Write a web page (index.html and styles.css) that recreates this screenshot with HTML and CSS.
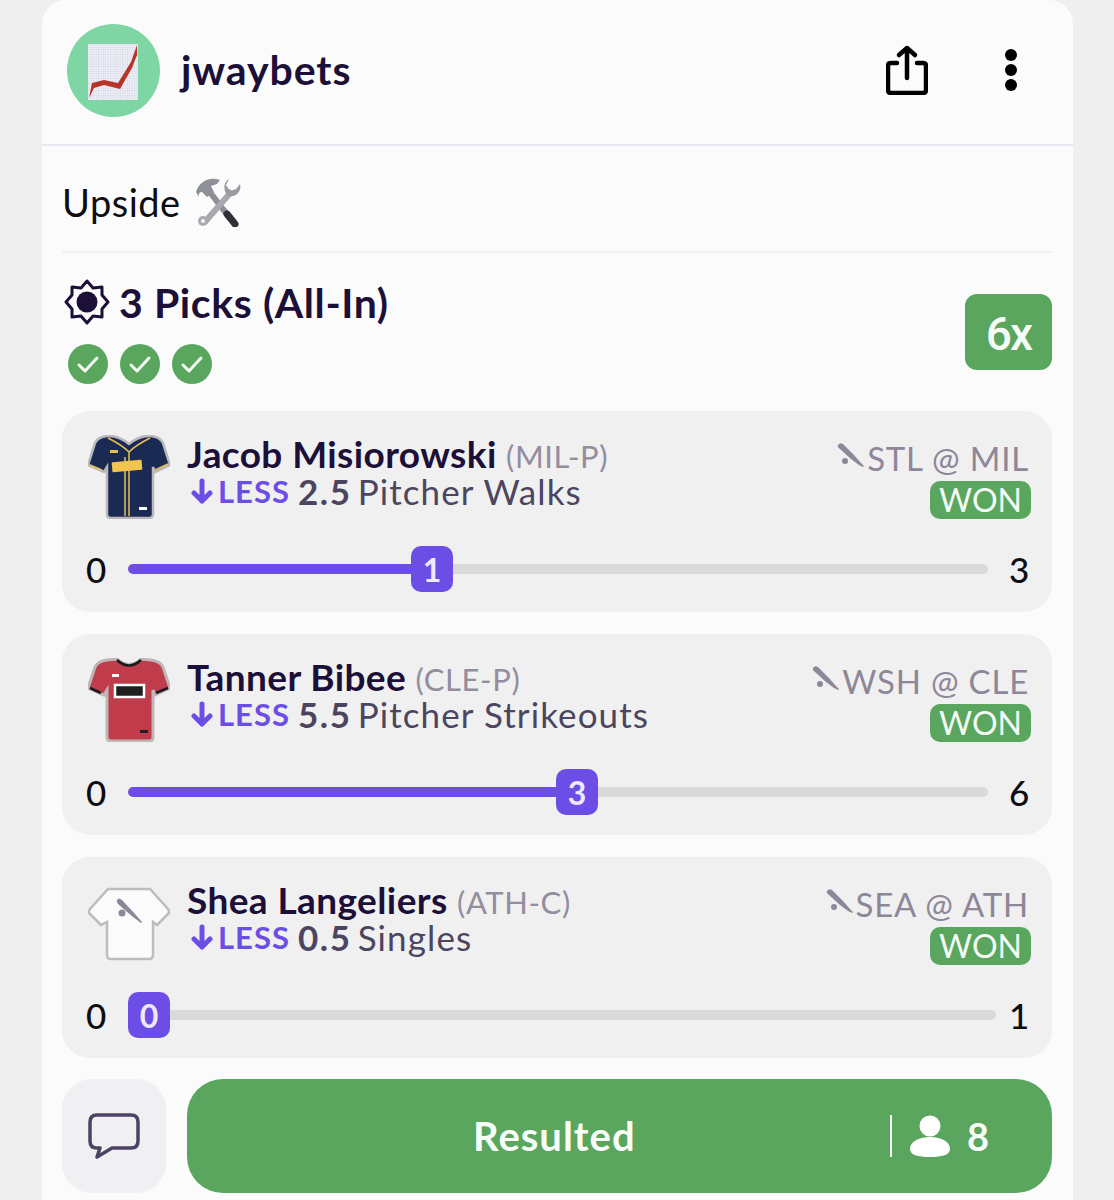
FILE: index.html
```html
<!DOCTYPE html>
<html lang="en">
<head>
<meta charset="utf-8">
<title>jwaybets</title>
<link rel="stylesheet" href="styles.css">
</head>
<body>
<main class="card">
  <header class="head">
    <div class="avatar">
      <svg class="chart" viewBox="0 0 52 58">
        <defs><pattern id="grid" width="2.4" height="2.4" patternUnits="userSpaceOnUse"><rect width="2.4" height="2.4" fill="#eeeef6"/><path d="M2.4 0V2.4H0" fill="none" stroke="#c4c6da" stroke-width=".5"/></pattern></defs>
        <rect x="1" y="1" width="50" height="56" fill="url(#grid)"/>
        <path d="M2 55 5 40 17 37 31 40 44 19 50 2V12L45 25 33 46 17 42 7 45Z" fill="#b8342b"/>
      </svg>
    </div>
    <div class="user">jwaybets</div>
    <svg class="share" viewBox="0 0 42 50" fill="none" stroke="#000" stroke-width="4.5" stroke-linecap="round" stroke-linejoin="round"><path d="M11 18H5Q2 18 2 21V45Q2 48 5 48H37Q40 48 40 45V21Q40 18 37 18H31"/><path d="M21 33V3M13 10 21 3 29 10"/></svg>
    <div class="dots"><i></i><i></i><i></i></div>
  </header>
  <section class="body">
    <div class="title">
      <span>Upside</span>
      <svg class="tools" viewBox="0 0 48 50">
        <path d="M35 40 15 14" stroke="#8c8e94" stroke-width="6"/>
        <path d="M33 37 41 47" stroke="#2f3137" stroke-width="7" stroke-linecap="round"/>
        <path d="M2 15C5 5 15-1 26 3L23 7 17 9 20 15 13 20 8 15Q4 15 5 20Z" fill="#8d9097"/>
        <path d="M10 46 38 14" stroke="#a7a9ae" stroke-width="6"/>
        <path d="M35 2 32 8 36 14 42 12 46 7C48 14 42 21 34 19 29 14 29 5 35 2Z" fill="#9a9ca2"/>
        <circle cx="9" cy="44" r="5" fill="#a7a9ae"/><circle cx="9" cy="44" r="2" fill="#f3f3f3"/>
      </svg>
    </div>
    <div class="summary">
      <div class="summary-main">
        <div class="picks">
          <svg class="seal" viewBox="0 0 46 46"><path d="M23 2 29 9 38 8 38 16 44 23 38 30 38 38 29 37 23 44 17 37 8 38 8 30 2 23 8 16 8 8 17 9Z" fill="none" stroke="#1c1038" stroke-width="3" stroke-linejoin="round"/><circle cx="23" cy="23" r="10.5" fill="#1c1038"/></svg>
          <span>3 Picks (All-In)</span>
        </div>
        <div class="checks">
          <svg class="check" viewBox="0 0 40 40"><circle cx="20" cy="20" r="20" fill="#5aa65f"/><path d="M11 21 17 27 29 14" fill="none" stroke="#f2faf2" stroke-width="3" stroke-linecap="round" stroke-linejoin="round"/></svg>
          <svg class="check" viewBox="0 0 40 40"><circle cx="20" cy="20" r="20" fill="#5aa65f"/><path d="M11 21 17 27 29 14" fill="none" stroke="#f2faf2" stroke-width="3" stroke-linecap="round" stroke-linejoin="round"/></svg>
          <svg class="check" viewBox="0 0 40 40"><circle cx="20" cy="20" r="20" fill="#5aa65f"/><path d="M11 21 17 27 29 14" fill="none" stroke="#f2faf2" stroke-width="3" stroke-linecap="round" stroke-linejoin="round"/></svg>
        </div>
      </div>
      <div class="mult">6x</div>
    </div>

    <article class="pick">
      <div class="pick-top">
        <svg class="jersey" viewBox="0 0 82 84">
          <path d="M19 1Q30 0 41 9 52 0 63 1 72 2 75 8L82 30 67 37 65 32V79Q65 83 61 83H23Q19 83 19 79V32L16 37 0 30 7 8Q10 2 19 1Z" fill="#1b2a52" stroke="#b9b9bd" stroke-width="2.5"/>
          <path d="M20 3Q34 10 41 17 48 10 62 3M41 17V81M37 22V81M2 30 14 35M67 35 80 29" fill="none" stroke="#e4c057" stroke-width="1.5"/>
          <rect x="24" y="26" width="30" height="10" rx="1" fill="#f0c44e" transform="rotate(-5 39 31)"/>
          <rect x="22" y="15" width="8" height="3" fill="#e9bf52"/>
          <rect x="51" y="72" width="8" height="3" fill="#fff"/>
        </svg>
        <div class="info">
          <div class="name">Jacob Misiorowski <span class="team">(MIL-P)</span></div>
          <div class="line">
            <svg class="arrow" viewBox="0 0 22 26" fill="none" stroke="#6c4ee6" stroke-width="5" stroke-linecap="round" stroke-linejoin="round"><path d="M11 3V23M3 15 11 23 19 15"/></svg>
            <span class="less">LESS</span> <b class="num">2.5</b> <span class="stat">Pitcher Walks</span>
          </div>
        </div>
        <div class="side">
          <div class="game">
            <svg class="bat" viewBox="0 0 28 28"><path d="M1 3Q3 0 6 2L17 13 24 21 27 24 26 25 22 23 14 17 3 7Q0 5 1 3Z" fill="#8d8798"/><circle cx="8" cy="19" r="3" fill="#8d8798"/></svg>
            <span>STL @ MIL</span>
          </div>
          <div class="won">WON</div>
        </div>
      </div>
      <div class="slider">
        <span class="end">0</span>
        <div class="track">
          <div class="fill" style="width:283px"></div>
          <div class="thumb">1</div>
          <div class="rest"></div>
        </div>
        <span class="end">3</span>
      </div>
    </article>

    <article class="pick">
      <div class="pick-top">
        <svg class="jersey" viewBox="0 0 82 84">
          <path d="M19 2 29 1Q41 12 53 1L63 2Q72 3 75 9L82 30 67 37 65 32V79Q65 83 61 83H23Q19 83 19 79V32L16 37 0 30 7 9Q10 3 19 2Z" fill="#c13c4b" stroke="#bfb6b7" stroke-width="3"/>
          <path d="M29 2Q41 13 53 2" fill="none" stroke="#1a1a1a" stroke-width="2.5"/>
          <path d="M2 30 13 35M68 35 80 30" fill="none" stroke="#1a1a1a" stroke-width="2.5"/>
          <rect x="27" y="27" width="29" height="12" fill="#1f1f1f" stroke="#fff" stroke-width="2.5"/>
          <rect x="24" y="16" width="7" height="3" fill="#fff"/>
          <rect x="52" y="72" width="8" height="3" fill="#1f1f1f"/>
        </svg>
        <div class="info">
          <div class="name">Tanner Bibee <span class="team">(CLE-P)</span></div>
          <div class="line">
            <svg class="arrow" viewBox="0 0 22 26" fill="none" stroke="#6c4ee6" stroke-width="5" stroke-linecap="round" stroke-linejoin="round"><path d="M11 3V23M3 15 11 23 19 15"/></svg>
            <span class="less">LESS</span> <b class="num">5.5</b> <span class="stat">Pitcher Strikeouts</span>
          </div>
        </div>
        <div class="side">
          <div class="game">
            <svg class="bat" viewBox="0 0 28 28"><path d="M1 3Q3 0 6 2L17 13 24 21 27 24 26 25 22 23 14 17 3 7Q0 5 1 3Z" fill="#8d8798"/><circle cx="8" cy="19" r="3" fill="#8d8798"/></svg>
            <span>WSH @ CLE</span>
          </div>
          <div class="won">WON</div>
        </div>
      </div>
      <div class="slider">
        <span class="end">0</span>
        <div class="track">
          <div class="fill" style="width:428px"></div>
          <div class="thumb">3</div>
          <div class="rest"></div>
        </div>
        <span class="end">6</span>
      </div>
    </article>

    <article class="pick">
      <div class="pick-top">
        <svg class="jersey" viewBox="0 0 82 84">
          <path d="M20 8H62L80 28Q82 31 80 33L69 44 65 41V74Q65 78 61 78H23Q19 78 19 74V41L13 44 2 33Q0 31 2 28Z" fill="#fbfbfc" stroke="#bdbdc0" stroke-width="2.5"/>
          <path d="M29 19Q31 16 34 19L47 33 54 41 53 42 45 36 31 24Q28 21 29 19Z" fill="#8d8798"/>
          <circle cx="34" cy="32" r="3.5" fill="#8d8798"/>
        </svg>
        <div class="info">
          <div class="name">Shea Langeliers <span class="team">(ATH-C)</span></div>
          <div class="line">
            <svg class="arrow" viewBox="0 0 22 26" fill="none" stroke="#6c4ee6" stroke-width="5" stroke-linecap="round" stroke-linejoin="round"><path d="M11 3V23M3 15 11 23 19 15"/></svg>
            <span class="less">LESS</span> <b class="num">0.5</b> <span class="stat">Singles</span>
          </div>
        </div>
        <div class="side">
          <div class="game">
            <svg class="bat" viewBox="0 0 28 28"><path d="M1 3Q3 0 6 2L17 13 24 21 27 24 26 25 22 23 14 17 3 7Q0 5 1 3Z" fill="#8d8798"/><circle cx="8" cy="19" r="3" fill="#8d8798"/></svg>
            <span>SEA @ ATH</span>
          </div>
          <div class="won">WON</div>
        </div>
      </div>
      <div class="slider">
        <span class="end">0</span>
        <div class="track track-wide">
          <div class="thumb">0</div>
          <div class="rest"></div>
        </div>
        <span class="end">1</span>
      </div>
    </article>

    <div class="actions">
      <div class="comment">
        <svg class="bubble" viewBox="0 0 52 46" fill="none" stroke="#4c4263" stroke-width="3.5" stroke-linejoin="round"><path d="M9 2H43Q50 2 50 9V28Q50 35 43 35H24L9 44 12 35H9Q2 35 2 28V9Q2 2 9 2Z"/></svg>
      </div>
      <div class="result">
        <span class="result-label">Resulted</span>
        <div class="entries">
          <svg class="person" viewBox="0 0 40 42" fill="#fff"><circle cx="20" cy="11" r="10.5"/><path d="M0 34C0 26 10 22 20 22S40 26 40 34C40 40 32 42 20 42S0 40 0 34Z"/></svg>
          <span>8</span>
        </div>
      </div>
    </div>
  </section>
</main>
</body>
</html>
```

FILE: styles.css
```css
* { box-sizing: border-box; }
html, body { margin: 0; height: 1200px; overflow: hidden; }
body { background: #efefef; font-family: "Lato", "Liberation Sans", sans-serif; color: #1c1038; }
.card { width: 1031px; height: 1200px; margin-left: 42px; background: #fbfbfc; border-radius: 24px 24px 0 0; }
.head { height: 146px; display: flex; align-items: center; padding: 0 57px 4px 25px; border-bottom: 2px solid #ebe6ef; }
.avatar { width: 93px; height: 93px; border-radius: 50%; background: #7ed6a5; display: flex; align-items: center; justify-content: center; flex: none; }
.chart { width: 52px; height: 58px; margin: 3px 0 0 -1px; }
.user { margin-left: 21px; margin-bottom: 2px; font-size: 41px; font-weight: 700; flex: 1; letter-spacing: .9px; }
.share { width: 42px; height: 50px; }
.dots { width: 12px; margin-left: 77px; display: flex; flex-direction: column; gap: 3px; margin-right: -1px; }
.dots i { display: block; width: 12px; height: 12px; border-radius: 50%; background: #000; }
.body { padding: 0 21px 0 20px; }
.title { height: 107px; display: flex; align-items: center; gap: 13px; font-size: 38px; letter-spacing: .5px; color: #0d0d12; border-bottom: 2px solid #f0eff1; padding-top: 6px; }
.tools { width: 48px; height: 50px; }
.summary { height: 158px; display: flex; justify-content: space-between; align-items: flex-start; }
.picks { display: flex; align-items: center; gap: 9px; margin-top: 26px; font-size: 41px; font-weight: 700; letter-spacing: .6px; height: 46px; padding-left: 2px; }
.seal { width: 46px; height: 46px; }
.checks { display: flex; gap: 12px; margin-top: 19px; padding-left: 6px; }
.check { width: 40px; height: 40px; }
.mult { width: 87px; height: 76px; margin-top: 41px; padding-top: 4px; border-radius: 12px; background: #5aa65f; color: #f4fbf4; display: flex; align-items: center; justify-content: center; font: 500 46px "Roboto", sans-serif; letter-spacing: -2px; }
.pick { height: 201px; margin-bottom: 22px; background: #f0f0f1; border-radius: 28px; padding: 24px 23px 0 26px; }
.pick-top { display: flex; height: 87px; }
.jersey { width: 82px; height: 84px; flex: none; }
.info { margin-left: 17px; flex: 1; }
.name { font-size: 37px; font-weight: 700; line-height: 36px; margin-top: 1px; letter-spacing: .4px; white-space: nowrap; }
.team { font-size: 31px; font-weight: 400; letter-spacing: .6px; color: #938d9f; }
.line { font-size: 35px; line-height: 34px; color: #4c4560; white-space: nowrap; display: flex; align-items: center; gap: 8px; letter-spacing: 1.1px; }
.arrow { width: 22px; height: 26px; margin-left: 4px; margin-right: -3px; }
.less { color: #6c4ee6; font-size: 31px; font-weight: 700; letter-spacing: 1px; }
.num { font-weight: 700; letter-spacing: 1.6px; margin-right: -2px; }
.side { display: flex; flex-direction: column; align-items: flex-end; }
.game { display: flex; align-items: center; gap: 2px; font-size: 33px; letter-spacing: .8px; color: #8d8798; height: 46px; white-space: nowrap; }
.bat { width: 28px; height: 28px; margin-bottom: 4px; }
.won { width: 101px; height: 38px; margin-right: -2px; background: #5aa65f; color: #f4fbf4; border-radius: 10px; font-size: 32px; line-height: 38px; text-align: center; }
.slider { display: flex; align-items: center; margin-top: 24px; margin-left: -2px; height: 46px; }
.end { width: 42px; font-size: 35px; font-weight: 500; color: #0d0d12; flex: none; }
.end:last-child { width: 20px; margin-left: 21px; }
.track { flex: 1; display: flex; align-items: center; height: 46px; }
.track-wide { margin-right: -8px; }
.fill { height: 10px; background: #6c4ee6; border-radius: 5px 0 0 5px; }
.thumb { width: 42px; height: 46px; flex: none; border-radius: 10px; background: #6c4ee6; color: #efe8ff; display: flex; align-items: center; justify-content: center; font-size: 32px; font-weight: 700; }
.rest { flex: 1; height: 10px; background: #d9d9da; border-radius: 0 5px 5px 0; }
.actions { display: flex; gap: 21px; height: 114px; margin-top: -1px; }
.comment { width: 104px; background: #f0f0f2; border-radius: 30px; display: flex; align-items: center; justify-content: center; flex: none; }
.bubble { width: 52px; height: 46px; }
.result { flex: 1; background: #5aa65f; border-radius: 36px; color: #f7fcf7; display: flex; align-items: center; font-size: 40px; font-weight: 700; padding-left: 286px; }
.result-label { flex: 1; letter-spacing: 1px; }
.entries { display: flex; align-items: center; gap: 17px; height: 42px; border-left: 2px solid #f7fcf7; padding-left: 18px; margin-right: 63px; font-size: 38px; }
.person { width: 40px; height: 42px; }
```
